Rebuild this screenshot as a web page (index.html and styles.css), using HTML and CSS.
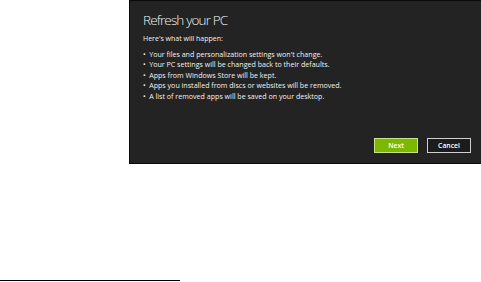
FILE: index.html
```html
<!DOCTYPE html>
<html>
<head>
<meta charset="utf-8">
<link rel="stylesheet" href="styles.css">
</head>
<body>
<div class="page">
  <div class="panel">
    <h1 class="title">Refresh your PC</h1>
    <p class="intro">Here's what will happen:</p>
    <ul class="list">
      <li>Your files and personalization settings won't change.</li>
      <li>Your PC settings will be changed back to their defaults.</li>
      <li>Apps from Windows Store will be kept.</li>
      <li>Apps you installed from discs or websites will be removed.</li>
      <li>A list of removed apps will be saved on your desktop.</li>
    </ul>
    <div class="actions">
      <button class="btn btn-next">Next</button>
      <button class="btn btn-cancel">Cancel</button>
    </div>
  </div>
  <div class="footnote-rule"></div>
</div>
</body>
</html>
```
FILE: styles.css
```css
html, body {
  margin: 0;
  padding: 0;
  background: #fff;
}
.page {
  width: 481px;
  height: 282px;
  display: flex;
  flex-direction: column;
  font-family: "Open Sans", "Liberation Sans", sans-serif;
}
.panel {
  margin-left: 129px;
  width: 352px;
  height: 164px;
  box-sizing: border-box;
  background: #232323;
  border-left: 1px solid #0a0a0a;
  border-top: 1px solid #0a0a0a;
  border-bottom: 1px solid #0a0a0a;
  padding: 10px 0 0 13px;
  color: #f2f2f2;
  display: flex;
  flex-direction: column;
}
.title {
  margin: 0;
  font-weight: 300;
  font-size: 13.5px;
  line-height: 18px;
  letter-spacing: -0.85px;
}
.intro {
  margin: 5px 0 0 0;
  font-size: 7px;
  line-height: 10px;
}
.list {
  margin: 5px 0 0 0;
  padding: 0;
  list-style: none;
  font-size: 7.1px;
  line-height: 10.4px;
}
.list li::before {
  content: "\2022";
  margin-right: 3.5px;
}
.actions {
  margin-top: auto;
  margin-bottom: 10px;
  display: flex;
  justify-content: flex-end;
  gap: 9px;
  padding-right: 10px;
}
.btn {
  width: 44px;
  height: 15px;
  box-sizing: border-box;
  font-family: "Open Sans", "Liberation Sans", sans-serif;
  font-size: 6.8px;
  font-weight: 600;
  color: #fff;
  padding: 0;
  margin: 0;
}
.btn-next {
  background: #7cb800;
  border: 1px solid #c9e28c;
}
.btn-cancel {
  background: #1c1c1c;
  border: 1.5px solid #d0d0d0;
}
.footnote-rule {
  margin-top: auto;
  margin-bottom: 1px;
  width: 180px;
  height: 1px;
  background: #000;
}
```
